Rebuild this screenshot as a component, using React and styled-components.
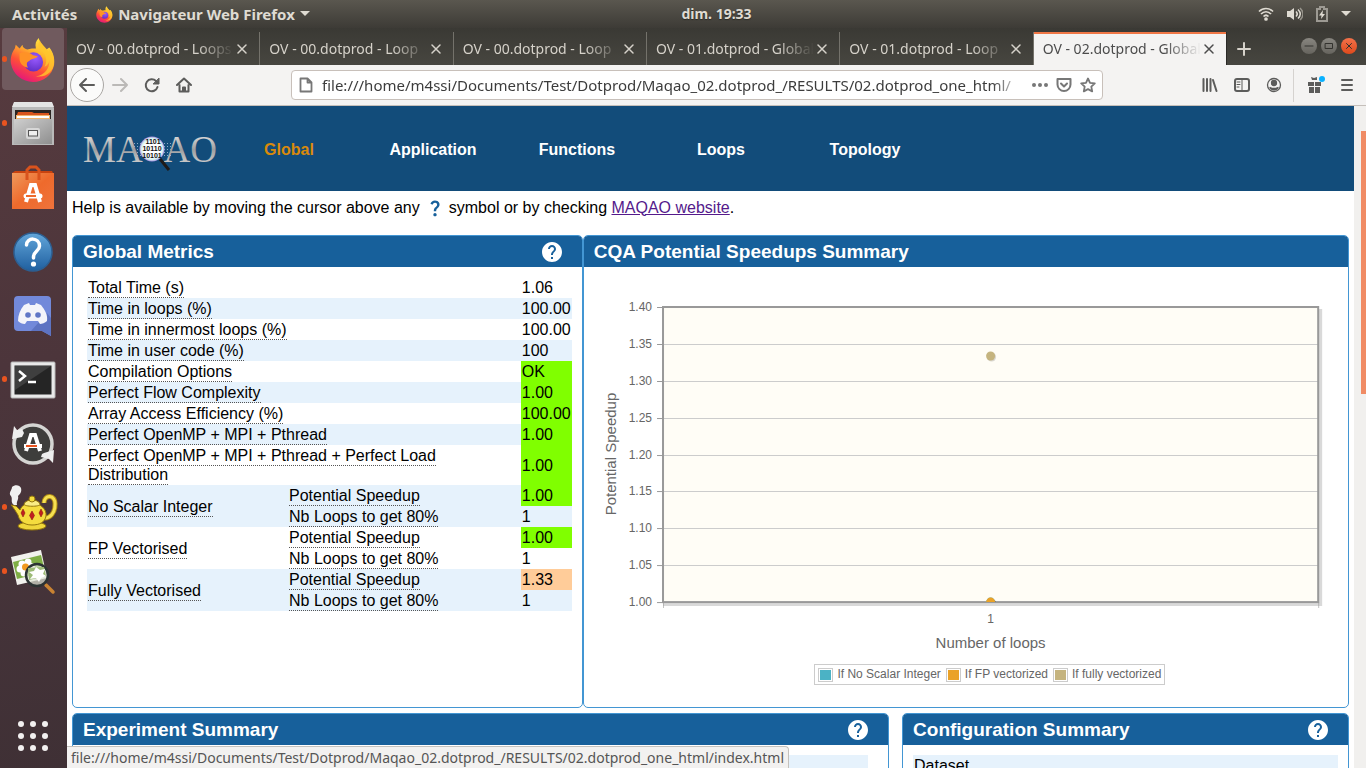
import React from "react";
import styled, { createGlobalStyle, css } from "styled-components";
import { MdHelp, MdQuestionMark } from "react-icons/md";

const shellFont = '"Noto Sans", "Open Sans", sans-serif';
const pageFont = '"Liberation Sans", Arial, sans-serif';

const GlobalStyle = createGlobalStyle`
  *, *::before, *::after { box-sizing: border-box; }
  body { margin: 0; background: #3a2b30; overflow: hidden; }
  button { font: inherit; color: inherit; background: none; border: 0; padding: 0; margin: 0; }
  svg { display: block; flex: none; }
`;

/* ---------- desktop shell ---------- */

const Desktop = styled.div`
  display: grid;
  grid-template-rows: 28px minmax(0, 1fr);
  height: 100vh;
  font-family: ${shellFont};
  font-size: 14px;
`;

const SystemBar = styled.header`
  display: grid;
  grid-template-columns: 1fr auto 1fr;
  align-items: center;
  padding: 0 15px 0 12px;
  background: linear-gradient(#5a574f, #3d3b36);
  color: #dfdbd2;
  font-weight: 700;
  text-shadow: 0 1px 1px #2b2a26;
  button, time { line-height: 20px; }
`;

const Clock = styled.time`
  padding-left: 70px;
  font-size: 14px;
`;

const BarGroup = styled.div`
  display: flex;
  align-items: center;
  font-size: 15px;
  gap: ${(p) => p.$gap}px;
  justify-content: ${(p) => (p.$end ? "flex-end" : "flex-start")};
`;

const AppMenu = styled.button`
  display: flex;
  align-items: center;
  gap: 5px;
`;

const Main = styled.div`
  display: grid;
  grid-template-columns: 67px minmax(0, 1fr);
  min-height: 0;
`;

const Dock = styled.nav`
  display: flex;
  flex-direction: column;
  min-height: 0;
  background: linear-gradient(170deg, #573b3f 0%, #4c353b 45%, #46343a 70%, #3f3035 100%);
`;

const DockItem = styled.button`
  position: relative;
  display: flex;
  align-items: center;
  justify-content: center;
  width: 62px;
  height: 62px;
  margin: 0 0 2px 2px;
  padding-top: 2px;
  border-radius: 4px;
  flex: none;
  ${(p) => p.$active && css`background: #705a5e;`}
  ${(p) => p.$running && css`
    &::before {
      content: "";
      position: absolute;
      left: 0;
      top: 28px;
      width: 5px;
      height: 6px;
      border-radius: 3px;
      background: #e95420;
    }
  `}
`;

const DockFooter = styled(DockItem)`
  margin-top: auto;
`;

/* ---------- browser window ---------- */

const Browser = styled.div`
  display: grid;
  grid-template-rows: 37px 41px minmax(0, 1fr);
  min-width: 0;
  min-height: 0;
`;

const TabStrip = styled.div`
  display: flex;
  align-items: flex-end;
  background: linear-gradient(#3a3934, #474640);
  color: #d6d2ca;
`;

const Tabs = styled.div`
  display: flex;
  flex: 0 1 1160px;
  min-width: 0;
`;

const Tab = styled.div`
  display: flex;
  align-items: center;
  flex: 1 1 0;
  min-width: 0;
  height: 33px;
  padding: 0 9px;
  border-right: 1px solid #74726b;
  ${(p) => p.$active && css`
    background: #f4f3f2;
    color: #4c4c4c;
    border-right-color: #2b2a27;
    box-shadow: inset 0 2px #f07746;
  `}
`;

const TabTitle = styled.button`
  flex: 1;
  min-width: 0;
  overflow: hidden;
  white-space: nowrap;
  text-align: left;
  line-height: 24px;
  mask-image: linear-gradient(to right, #000 calc(100% - 36px), transparent);
`;

const IconButton = styled.button`
  display: inline-flex;
  align-items: center;
  justify-content: center;
  width: ${(p) => p.$size || 16}px;
  height: ${(p) => p.$size || 16}px;
  flex: none;
`;

const NewTab = styled(IconButton)`
  height: 33px;
  width: 33px;
`;

const WindowButtons = styled.div`
  display: flex;
  gap: 4px;
  margin-left: auto;
  padding: 0 9px 11px 0;
`;

const WindowButton = styled(IconButton)`
  border-radius: 50%;
  color: #33322e;
  background: ${(p) => (p.$close ? "linear-gradient(#f4724a, #df4a1c)" : "linear-gradient(#888680, #66645e)")};
`;

const Toolbar = styled.div`
  display: flex;
  align-items: center;
  background: #f4f3f2;
  border-bottom: 1px solid #c5bfba;
  color: #5c5c5b;
  padding: 0 11px 0 3px;
`;

const BackButton = styled(IconButton)`
  border: 1px solid #a9a6a3;
  border-radius: 50%;
  background: #fbfbfa;
`;

const NavButtons = styled.div`
  display: flex;
  align-items: center;
  gap: 16px;
  padding-left: 8px;
`;

const AddressBar = styled.div`
  display: flex;
  align-items: center;
  flex: 0 1 812px;
  min-width: 0;
  height: 30px;
  margin: 0 auto 0 99px;
  padding: 0 6px;
  gap: 8px;
  background: #fff;
  border: 1px solid #c8c0ba;
  border-radius: 4px;
  color: #777;
`;

const AddressInput = styled.input`
  flex: 1;
  min-width: 0;
  padding: 0;
  border: 0;
  outline: 0;
  background: transparent;
  color: #3c3c3c;
  font-family: ${shellFont};
  font-size: 15px;
  line-height: 24px;
  mask-image: linear-gradient(to right, #000 calc(100% - 32px), transparent);
`;

const ToolGroup = styled.div`
  display: flex;
  align-items: center;
  gap: ${(p) => p.$gap || 16}px;
`;

const Divider = styled.span`
  width: 1px;
  height: 33px;
  margin: 0 13px 0 11px;
  background: #d5d2cf;
`;

const Viewport = styled.div`
  position: relative;
  display: grid;
  grid-template-columns: minmax(0, 1fr) 12px;
  min-height: 0;
  overflow: hidden;
`;

const ScrollTrack = styled.div`
  display: flex;
  justify-content: flex-end;
  padding-top: 25px;
  background: #f1f0ee;
`;

const ScrollThumb = styled.div`
  width: 5px;
  height: 263px;
  background: #f08b64;
`;

const StatusBar = styled.div`
  position: absolute;
  left: 0;
  bottom: 0;
  height: 22px;
  padding: 0 4px;
  line-height: 21px;
  color: #555;
  background: #f2f1f0;
  border: 1px solid #c4c1bd;
  border-width: 1px 1px 0 0;
  border-radius: 0 4px 0 0;
  white-space: nowrap;
`;

/* ---------- report page ---------- */

const Report = styled.main`
  min-width: 0;
  min-height: 0;
  overflow: hidden;
  background: #fff;
  color: #000;
  font-family: ${pageFont};
  font-size: 16px;
  line-height: 19px;
`;

const Masthead = styled.header`
  display: flex;
  align-items: center;
  height: 85px;
  padding: 2px 0 0 16px;
  background: #124c7a;
`;

const Menu = styled.nav`
  display: flex;
`;

const MenuLink = styled.a`
  width: 144px;
  text-align: center;
  font-weight: 700;
  text-decoration: none;
  color: ${(p) => (p.$active ? "#d98a0b" : "#fff")};
`;

const HelpLine = styled.p`
  display: flex;
  align-items: center;
  height: 32px;
  margin: 0;
  padding: 0 5px;
  white-space: pre;
  svg { margin: 2px 4px 0 5px; color: #17609b; }
  a { color: #551a8b; }
`;

const PanelRow = styled.div`
  display: grid;
  grid-template-columns: ${(p) => p.$columns};
  justify-content: space-between;
  margin: ${(p) => p.$top}px 5px 0;
`;

const PanelBox = styled.section`
  min-width: 0;
  min-height: ${(p) => p.$height}px;
  border: 1px solid #4396d3;
  border-radius: 5px;
  overflow: hidden;
`;

const PanelHeader = styled.header`
  display: flex;
  align-items: center;
  justify-content: space-between;
  height: 31px;
  padding: 0 18px 0 10px;
  background: #17609b;
  color: #fff;
`;

const PanelTitle = styled.h2`
  margin: 0;
  font-size: 19px;
  line-height: 24px;
`;

const PanelBody = styled.div`
  padding: 10px ${(p) => p.$right || 10}px 0 ${(p) => p.$left || 10}px;
`;

const Metrics = styled.table`
  width: 100%;
  table-layout: fixed;
  border-collapse: collapse;
  td, th {
    height: 21px;
    padding: 1px;
    font-weight: 400;
    text-align: left;
    vertical-align: middle;
  }
`;

const Row = styled.tr`
  background: ${(p) => (p.$shade ? "#e6f2fc" : "#fff")};
`;

const Value = styled.td`
  background: ${(p) => ({ good: "#80ff00", warn: "#ffcc99" }[p.$tone] || "transparent")};
`;

const Term = styled.span`
  padding-bottom: 1px;
  border-bottom: 1px dotted #555;
`;

const ChartSvg = styled.svg`
  width: 100%;
  height: auto;
  font-family: ${pageFont};
`;

const Legend = styled.ul`
  display: flex;
  width: max-content;
  margin: 7px auto 0;
  position: relative;
  left: 24px;
  padding: 1px 3px;
  gap: 5px;
  border: 1px solid #ccc;
  list-style: none;
  color: #666;
  font-size: 12px;
  line-height: 17px;
`;

const LegendItem = styled.li`
  display: flex;
  align-items: center;
  gap: 4px;
`;

const Swatch = styled.span`
  width: 15px;
  height: 14px;
  padding: 1px;
  border: 1px solid #ccc;
  background: ${(p) => p.$color} content-box;
`;

/* ---------- drawings ---------- */

function Firefox({ size }) {
  return (
    <svg width={size} height={size} viewBox="0 0 48 48" aria-hidden="true">
      <defs>
        <linearGradient id="ffx" x1="0.8" y1="0" x2="0.3" y2="1">
          <stop offset="0" stopColor="#fff04a" />
          <stop offset="0.35" stopColor="#ffb52b" />
          <stop offset="0.65" stopColor="#ff5136" />
          <stop offset="1" stopColor="#e3137e" />
        </linearGradient>
        <radialGradient id="ffb" cx="0.6" cy="0.3" r="0.8">
          <stop offset="0" stopColor="#9a5bff" />
          <stop offset="1" stopColor="#5a2ac0" />
        </radialGradient>
      </defs>
      <path fill="url(#ffx)" d="M30 1c1 5 5 8 8 12l3-2c4 5 6 11 5 18-2 11-11 18-22 18S3 39 1 28c-1-6 1-12 4-16l1-4 4 4 3-4c0 3 2 4 5 5 3-1 7-1 9-1-1-5 0-8 3-11z" />
      <circle cx="24.500" cy="26" r="10" fill="url(#ffb)" />
      <path fill="#ff9226" d="M10 17c5-2 11-1 14 2l5 1c-2 3-7 2-9 5-3 1-3 4-1 7-6-1-9-5-9-9z" />
      <path fill="#ffc52c" opacity="0.800" d="M31 13c6 4 9 11 5 18 3-1 5-4 5-7 1 8-5 16-14 17 11 2 19-6 19-15 0-6-2-11-6-14l1 4c-3-5-8-8-10-13-2 4-2 7 0 10z" />
    </svg>
  );
}

function Files() {
  return (
    <svg width="44" height="46" viewBox="0 0 44 46" aria-hidden="true">
      <defs>
        <linearGradient id="cab" x1="0" y1="0" x2="1" y2="1">
          <stop offset="0" stopColor="#cfcfcf" />
          <stop offset="1" stopColor="#8f8f8f" />
        </linearGradient>
      </defs>
      <path fill="#b9b9b9" d="M3 2h38l2 5v37H1V7z" />
      <path fill="#e4e4e4" d="M3 1h38l2 5H1z" />
      <path fill="#2b2522" d="M4 9h36v10H4z" />
      <path fill="#d9541c" d="M7 11h14l2 1h15v4H5z" />
      <path fill="#f2b36c" d="M5 14h34v5H5z" />
      <path fill="#fff" d="M6 15h32v2H6z" />
      <path fill="url(#cab)" d="M3 18h38v25H3z" />
      <rect x="15" y="27" width="14" height="11" rx="2" fill="#d7d7d7" />
      <rect x="17.500" y="29.500" width="9" height="5.500" fill="#eee" stroke="#555" />
    </svg>
  );
}

function Software() {
  return (
    <svg width="44" height="46" viewBox="0 0 44 46" aria-hidden="true">
      <defs>
        <linearGradient id="bag" x1="0" y1="0" x2="1" y2="1">
          <stop offset="0" stopColor="#ef9a5c" />
          <stop offset="0.5" stopColor="#ee6a2c" />
          <stop offset="1" stopColor="#f0733c" />
        </linearGradient>
      </defs>
      <path fill="#c9430f" d="M1 8l3-2h37l2 4H1z" />
      <path fill="url(#bag)" d="M1 8h42v36H1z" />
      <path fill="none" stroke="#d9531d" strokeWidth="3" d="M16 15V5l3-3h6l3 3v10" />
      <path fill="none" stroke="#fff" strokeWidth="4" d="M15 37l5-17h4l5 17" />
      <path stroke="#fff" strokeWidth="5" strokeLinecap="round" d="M15 31h14" />
      <path stroke="#ee6a2c" strokeWidth="2" d="M15 31h10" />
    </svg>
  );
}

function HelpBubble() {
  return (
    <svg width="42" height="42" viewBox="0 0 42 42" aria-hidden="true">
      <defs>
        <linearGradient id="hlp" x1="0" y1="0" x2="0" y2="1">
          <stop offset="0" stopColor="#62a6da" />
          <stop offset="1" stopColor="#1f5f9f" />
        </linearGradient>
      </defs>
      <circle cx="21" cy="21" r="19" fill="url(#hlp)" stroke="#2c5f92" strokeWidth="1.500" />
      <path fill="none" stroke="#fff" strokeWidth="3.500" strokeLinecap="round" d="M14.500 14c0-8 13-8 13 1 0 5-6 5-6 11v1" />
      <circle cx="21.500" cy="33" r="2.600" fill="#fff" />
    </svg>
  );
}

function Discord() {
  return (
    <svg width="40" height="42" viewBox="0 0 40 42" aria-hidden="true">
      <path fill="#7289da" d="M5 1h29a4 4 0 0 1 4 4v36l-9-5H5a4 4 0 0 1-4-4V5a4 4 0 0 1 4-4z" />
      <path fill="#5d73c2" d="M34 18l4 5v18l-9-5H18z" />
      <path fill="#f4f4fa" d="M11 10l5-2 1 2h5l1-2 5 2c4 5 7 10 6 16-2 2-5 3-7 3l-2-3H14l-2 3c-3 0-5-1-7-3 0-6 2-11 6-16z" />
      <circle cx="15" cy="20" r="2.800" fill="#6076c6" />
      <circle cx="25" cy="20" r="2.800" fill="#6076c6" />
    </svg>
  );
}

function Terminal() {
  return (
    <svg width="46" height="40" viewBox="0 0 46 40" aria-hidden="true">
      <rect x="1" y="2" width="44" height="36" rx="1" fill="#e9e9e9" stroke="#b6b6b6" />
      <rect x="4.500" y="5.500" width="37" height="29" fill="#252525" />
      <path fill="#3f3f3f" d="M5 6h36L5 30z" />
      <path fill="none" stroke="#fff" strokeWidth="2.500" d="M9 11l6 5-6 5M18 22h8" />
    </svg>
  );
}

function Updater() {
  return (
    <svg width="44" height="44" viewBox="0 0 44 44" aria-hidden="true">
      <circle cx="22" cy="22" r="19" fill="#3e3e3c" stroke="#d5d5d3" strokeWidth="3.500" />
      <path fill="#eee" d="M1 17L3 4l3 4 5-1 2 4-2 4zM43 28l-1 13-4-4-8-2 1-3 2-1z" />
      <path fill="none" stroke="#fff" strokeWidth="4" d="M15 29l5-16h4l5 16" />
      <path stroke="#fff" strokeWidth="4" d="M13 24h18" />
      <path stroke="#e95420" strokeWidth="2" d="M15 24h11" />
    </svg>
  );
}

function Teapot() {
  return (
    <svg width="50" height="48" viewBox="0 0 50 48" aria-hidden="true">
      <path fill="#f1f1f1" d="M6 21C2 18 5 15 3 12 0 9 4 6 4 3c3-3 8-2 9 1 1 4-1 6-3 8 1 4-2 5-1 9z" />
      <path fill="none" stroke="#b08c14" strokeWidth="5" d="M36 19c0-9 12-9 11 2 0 8-5 13-10 13" />
      <path fill="none" stroke="#f6e052" strokeWidth="3" d="M36 19c0-9 12-9 11 2 0 8-5 13-10 13" />
      <ellipse cx="24" cy="42" rx="14" ry="4" fill="#f0d63a" stroke="#94760c" />
      <path fill="#f5dc3e" stroke="#94760c" d="M3 21l5 1 4 4c2-5 6-7 12-7 8 0 15 6 14 13-1 6-6 9-14 9-9 0-13-5-14-10C8 28 6 24 3 21z" />
      <path fill="#f9ec85" stroke="#94760c" d="M16 20c1-3 5-4 8-4s7 1 8 4-16 3-16 0z" />
      <circle cx="24" cy="15" r="3" fill="#f5dc3e" stroke="#94760c" />
      <path fill="#c21f1f" stroke="#7d1010" strokeWidth="0.500" d="M15 25l2 4-2 4-2-4zM24 27l2.500 4.500L24 36l-2.500-4.500zM33 25l2 4-2 4-2-4z" />
    </svg>
  );
}

function ImageViewer() {
  return (
    <svg width="46" height="46" viewBox="0 0 46 46" aria-hidden="true">
      <path fill="#f2f2ee" d="M1 8l30-7 6 28-30 7z" />
      <path fill="#7fae45" d="M3 13l28-7 4 17-28 7z" />
      <g fill="#fff">
        <circle cx="12" cy="15" r="3.500" /><circle cx="18" cy="13" r="3.500" /><circle cx="10" cy="20" r="3.500" /><circle cx="14" cy="24" r="3.500" /><circle cx="21" cy="18" r="4" />
      </g>
      <circle cx="15.500" cy="18" r="3.500" fill="#f29a1f" />
      <path stroke="#c98332" strokeWidth="3.500" strokeLinecap="round" d="M36 36l7 7" />
      <circle cx="27" cy="26" r="11" fill="#dfe4d4" fillOpacity="0.700" stroke="#2c3333" strokeWidth="2.500" />
      <path fill="#9dbb77" d="M18 19l16-1 2 9-17 4z" />
      <path fill="#fff" d="M19 23l5-1 2-4 4 3 5-1-2 5 3 2-5 2-2 4-3-4-6 1 3-4z" />
    </svg>
  );
}

function AppGrid() {
  return (
    <svg width="34" height="34" viewBox="0 0 34 34" aria-hidden="true" fill="#f2f0f0">
      {[5, 17, 29].map((y) => [5, 17, 29].map((x) => <circle key={`${x}-${y}`} cx={x} cy={y} r="3" />))}
    </svg>
  );
}

function Line({ d, size = 16, width = 2, children }) {
  return (
    <svg width={size} height={size} viewBox={`0 0 ${size} ${size}`} fill="none" stroke="currentColor" strokeWidth={width} strokeLinecap="round" strokeLinejoin="round" aria-hidden="true">
      {d && <path d={d} />}
      {children}
    </svg>
  );
}

const Caret = () => (
  <svg width="10" height="6" viewBox="0 0 10 6" aria-hidden="true"><path fill="currentColor" d="M0 0h10L5 5z" /></svg>
);

function MaqaoLogo() {
  return (
    <svg width="134" height="44" viewBox="0 0 134 44" role="img" aria-label="MAQAO">
      <defs>
        <linearGradient id="steel" x1="0" y1="0" x2="0" y2="1">
          <stop offset="0.200" stopColor="#d3d3d3" />
          <stop offset="0.500" stopColor="#9d9fa1" />
          <stop offset="0.800" stopColor="#c6c6c6" />
        </linearGradient>
        <radialGradient id="lens">
          <stop offset="0.650" stopColor="#fff" />
          <stop offset="0.850" stopColor="#d3f2f0" />
          <stop offset="1" stopColor="#a58be0" />
        </radialGradient>
        <pattern id="bits" width="3" height="3" patternUnits="userSpaceOnUse">
          <rect width="1" height="1" fill="#8aa9c6" />
        </pattern>
      </defs>
      <rect x="51" y="14" width="38" height="14" fill="url(#bits)" />
      <g fill="url(#steel)" fontFamily="Liberation Serif, Times New Roman, serif" fontSize="37">
        <text x="0" y="34">MA</text>
        <text x="134" y="34" textAnchor="end">AO</text>
      </g>
      <path stroke="#1e1a18" strokeWidth="3" d="M77 31l9 11" />
      <circle cx="69" cy="21" r="12.500" fill="url(#lens)" />
      <g fill="#111" fontFamily="Liberation Sans, sans-serif" fontSize="7" fontWeight="700" textAnchor="middle">
        <text x="70" y="16">1101</text>
        <text x="69" y="23">10110</text>
        <text x="69" y="30">10101</text>
      </g>
    </svg>
  );
}

/* ---------- data ---------- */

const dockItems = [
  { label: "Firefox", icon: <Firefox size={46} />, active: true, running: true },
  { label: "Fichiers", icon: <Files />, running: true },
  { label: "Logiciels", icon: <Software /> },
  { label: "Aide", icon: <HelpBubble /> },
  { label: "Discord", icon: <Discord /> },
  { label: "Terminal", icon: <Terminal />, running: true },
  { label: "Mises à jour", icon: <Updater /> },
  { label: "Kettle", icon: <Teapot />, running: true },
  { label: "Images", icon: <ImageViewer />, running: true },
];

const tabs = [
  { id: 1, title: "OV - 00.dotprod - Loops" },
  { id: 2, title: "OV - 00.dotprod - Loop" },
  { id: 3, title: "OV - 00.dotprod - Loop" },
  { id: 4, title: "OV - 01.dotprod - Global" },
  { id: 5, title: "OV - 01.dotprod - Loop" },
  { id: 6, title: "OV - 02.dotprod - Global", active: true },
];

const metrics = [
  { name: "Total Time (s)", value: "1.06" },
  { name: "Time in loops (%)", value: "100.00" },
  { name: "Time in innermost loops (%)", value: "100.00" },
  { name: "Time in user code (%)", value: "100" },
  { name: "Compilation Options", value: "OK", tone: "good" },
  { name: "Perfect Flow Complexity", value: "1.00", tone: "good" },
  { name: "Array Access Efficiency (%)", value: "100.00", tone: "good" },
  { name: "Perfect OpenMP + MPI + Pthread", value: "1.00", tone: "good" },
  { name: "Perfect OpenMP + MPI + Pthread + Perfect Load Distribution", value: "1.00", tone: "good" },
  { name: "No Scalar Integer", speedup: "1.00", tone: "good", loops: "1" },
  { name: "FP Vectorised", speedup: "1.00", tone: "good", loops: "1" },
  { name: "Fully Vectorised", speedup: "1.33", tone: "warn", loops: "1" },
];

const series = [
  { name: "If No Scalar Integer", color: "#4bb2c5", value: 1.0 },
  { name: "If FP vectorized", color: "#eaa228", value: 1.0 },
  { name: "If fully vectorized", color: "#c5b47f", value: 1.333 },
];

const ticks = [1.4, 1.35, 1.3, 1.25, 1.2, 1.15, 1.1, 1.05, 1.0];
const reportFolder = "file:///home/m4ssi/Documents/Test/Dotprod/Maqao_02.dotprod_/RESULTS/02.dotprod_one_html/";
const statusUrl = `${reportFolder}index.html`;

/* ---------- parts ---------- */

function Panel({ title, help, height, left, right, children }) {
  return (
    <PanelBox $height={height}>
      <PanelHeader>
        <PanelTitle>{title}</PanelTitle>
        {help && <IconButton $size={24} aria-label={`Help: ${title}`}><MdHelp size={24} /></IconButton>}
      </PanelHeader>
      <PanelBody $left={left} $right={right}>{children}</PanelBody>
    </PanelBox>
  );
}

const GroupColumn = styled.col`
  width: 201px;
`;

const ValueColumn = styled.col`
  width: 51px;
`;

function MetricsTable() {
  return (
    <Metrics>
      <colgroup>
        <GroupColumn />
        <col />
        <ValueColumn />
      </colgroup>
      <tbody>
        {metrics.map((m, i) =>
          m.speedup ? (
            <React.Fragment key={m.name}>
              <Row $shade={i % 2 === 1}>
                <th scope="row" rowSpan={2}><Term>{m.name}</Term></th>
                <td><Term>Potential Speedup</Term></td>
                <Value $tone={m.tone}>{m.speedup}</Value>
              </Row>
              <Row $shade={i % 2 === 1}>
                <td><Term>Nb Loops to get 80%</Term></td>
                <Value>{m.loops}</Value>
              </Row>
            </React.Fragment>
          ) : (
            <Row key={m.name} $shade={i % 2 === 1}>
              <th scope="row" colSpan={2}><Term>{m.name}</Term></th>
              <Value $tone={m.tone}>{m.value}</Value>
            </Row>
          )
        )}
      </tbody>
    </Metrics>
  );
}

const plot = { left: 79, right: 734, top: 40, bottom: 335 };
const yOf = (v) => Math.round(plot.bottom - ((v - 1) / 0.4) * (plot.bottom - plot.top));

function SpeedupChart() {
  const middle = (plot.left + plot.right) / 2;
  return (
    <>
      <ChartSvg viewBox="0 0 764 390" role="img" aria-label="Potential speedup by number of loops">
        <defs>
          <clipPath id="area"><rect x={plot.left} y={plot.top} width={plot.right - plot.left} height={plot.bottom - plot.top} /></clipPath>
        </defs>
        <path fill="none" stroke="#000" strokeOpacity="0.150" strokeWidth="4" d={`M${plot.left} ${plot.bottom + 2}H${plot.right + 2}V${plot.top + 2}`} />
        <rect x={plot.left} y={plot.top} width={plot.right - plot.left} height={plot.bottom - plot.top} fill="#fffdf6" />
        {ticks.map((t) => (
          <g key={t}>
            <line x1={plot.left} x2={plot.right} y1={yOf(t) + 0.5} y2={yOf(t) + 0.5} stroke="#ccc" />
            <line x1={plot.left - 6} x2={plot.left} y1={yOf(t) + 0.5} y2={yOf(t) + 0.5} stroke="#999" />
            <text x="68" y={yOf(t) + 4} textAnchor="end" fontSize="12" fill="#666">{t.toFixed(2)}</text>
          </g>
        ))}
        <path stroke="#999" strokeOpacity="0.600" d={`M${plot.left + 0.5} ${plot.bottom}v6M${plot.right + 0.5} ${plot.bottom}v6`} />
        <rect x={plot.left} y={plot.top} width={plot.right - plot.left} height={plot.bottom - plot.top} fill="none" stroke="#999" strokeWidth="2" />
        <g clipPath="url(#area)">
          {series.map((s) => (
            <g key={s.name}>
              <circle cx={middle + 1} cy={yOf(s.value) + 1} r="4.500" fill="#000" opacity="0.150" />
              <circle cx={middle} cy={yOf(s.value)} r="4.500" fill={s.color} />
            </g>
          ))}
        </g>
        <g fill="#666" textAnchor="middle">
          <text x={middle} y="356" fontSize="12">1</text>
          <text x={middle} y="381" fontSize="15">Number of loops</text>
          <text transform="translate(32 187) rotate(-90)" fontSize="15">Potential Speedup</text>
        </g>
      </ChartSvg>
      <Legend>
        {series.map((s) => (
          <LegendItem key={s.name}><Swatch $color={s.color} />{s.name}</LegendItem>
        ))}
      </Legend>
    </>
  );
}

function ReportPage() {
  return (
    <Report>
      <Masthead>
        <MaqaoLogo />
        <Menu>
          {["Global", "Application", "Functions", "Loops", "Topology"].map((m, i) => (
            <MenuLink key={m} href="#" $active={i === 0}>{m}</MenuLink>
          ))}
        </Menu>
      </Masthead>
      <HelpLine>
        <span>Help is available by moving the cursor above any</span>
        <MdQuestionMark size={20} />
        <span>symbol or by checking <a href="#">MAQAO website</a>.</span>
      </HelpLine>
      <PanelRow $columns="2fr 3fr" $top={12}>
        <Panel title="Global Metrics" help height={473} left={14}><MetricsTable /></Panel>
        <PanelBox $height={473}>
          <PanelHeader><PanelTitle>CQA Potential Speedups Summary</PanelTitle></PanelHeader>
          <SpeedupChart />
        </PanelBox>
      </PanelRow>
      <PanelRow $columns="64% 35%" $top={5}>
        <Panel title="Experiment Summary" help height={120} left={14} right={20}>
          <Metrics><tbody><Row $shade><td /></Row></tbody></Metrics>
        </Panel>
        <Panel title="Configuration Summary" help height={120}>
          <Metrics><tbody><Row $shade><td>Dataset</td></Row></tbody></Metrics>
        </Panel>
      </PanelRow>
    </Report>
  );
}

export default function App() {
  return (
    <Desktop>
      <GlobalStyle />
      <SystemBar>
        <BarGroup $gap={19}>
          <button>Activités</button>
          <AppMenu><Firefox size={17} /><span>Navigateur Web Firefox</span><Caret /></AppMenu>
        </BarGroup>
        <Clock>dim. 19:33</Clock>
        <BarGroup $end $gap={13}>
          <svg width="16" height="14" viewBox="0 0 16 14" fill="none" stroke="currentColor" strokeWidth="1.700" aria-hidden="true">
            <path d="M1 4.500c4-4 10-4 14 0M3 7c3-3 7-3 10 0M5.500 9.500c1.500-1.500 3.500-1.500 5 0" /><circle cx="8" cy="12" r="1" fill="currentColor" />
          </svg>
          <svg width="16" height="14" viewBox="0 0 16 14" fill="none" stroke="currentColor" strokeWidth="1.500" aria-hidden="true">
            <path fill="currentColor" stroke="none" d="M0 4h3l4-3v12l-4-3H0z" /><path d="M9 4.500c1.500 1.500 1.500 3.500 0 5M11 2.500c3 3 3 6 0 9" /><path opacity="0.500" d="M13 1c4 4 4 8 0 12" />
          </svg>
          <svg width="12" height="16" viewBox="0 0 12 16" aria-hidden="true">
            <path fill="none" stroke="#9d9a93" strokeWidth="2" d="M1 3h3V1h4v2h3v12H1z" /><path fill="currentColor" d="M7 4L3 9.500h2.500L5 13l4-5H6.500z" />
          </svg>
          <Caret />
        </BarGroup>
      </SystemBar>
      <Main>
        <Dock>
          {dockItems.map((d) => (
            <DockItem key={d.label} aria-label={d.label} $active={d.active} $running={d.running}>{d.icon}</DockItem>
          ))}
          <DockFooter aria-label="Applications"><AppGrid /></DockFooter>
        </Dock>
        <Browser>
          <TabStrip>
            <Tabs>
              {tabs.map((t) => (
                <Tab key={t.id} $active={t.active}>
                  <TabTitle>{t.title}</TabTitle>
                  <IconButton aria-label="Fermer l’onglet"><Line d="M4 4l8 8M12 4l-8 8" width={1.5} /></IconButton>
                </Tab>
              ))}
            </Tabs>
            <NewTab aria-label="Nouvel onglet"><Line d="M8 2v12M2 8h12" /></NewTab>
            <WindowButtons>
              <WindowButton aria-label="Réduire"><Line d="M4 8h8" width={1} /></WindowButton>
              <WindowButton aria-label="Agrandir"><Line d="M4.500 5.500h7v5h-7z" width={1} /></WindowButton>
              <WindowButton $close aria-label="Fermer"><Line d="M5.500 5.500l5 5M10.500 5.500l-5 5" width={1} /></WindowButton>
            </WindowButtons>
          </TabStrip>
          <Toolbar>
            <BackButton $size={34} aria-label="Précédent"><Line d="M15 8H1M7 2L1 8l6 6" /></BackButton>
            <NavButtons>
              <IconButton aria-label="Suivant" disabled><svg width="16" height="16" viewBox="0 0 16 16" fill="none" stroke="#bbb9b7" strokeWidth="2" strokeLinecap="round" strokeLinejoin="round"><path d="M1 8h14M9 2l6 6-6 6" /></svg></IconButton>
              <IconButton aria-label="Actualiser"><Line><path d="M13.500 10A6 6 0 1 1 12 4l1.500 1.500" /><path fill="currentColor" strokeWidth="1" d="M15 1.500V7H9.500z" /></Line></IconButton>
              <IconButton aria-label="Accueil"><Line d="M1 8l7-6.500L15 8M3.500 8v6.500h9V8M7 14V10.500h2V14" /></IconButton>
            </NavButtons>
            <AddressBar>
              <Line d="M2.500 1.500h7l4 4v9h-11zM9.500 1.500v4h4" width={1.8} />
              <AddressInput aria-label="Adresse" readOnly value={reportFolder} />
              <svg width="16" height="16" viewBox="0 0 16 16" fill="currentColor" aria-hidden="true"><circle cx="2" cy="8" r="2" /><circle cx="8" cy="8" r="2" /><circle cx="14" cy="8" r="2" /></svg>
              <IconButton aria-label="Pocket"><Line d="M1.500 2h13v5.500a6.500 6.500 0 0 1-13 0zM5 6.500l3 3 3-3" /></IconButton>
              <IconButton aria-label="Marque-page"><Line width={1.8} d="M8 1.500l2 4.300 4.800.6-3.500 3.200.9 4.800L8 12.100l-4.200 2.300.9-4.800L1.200 6.400 6 5.800z" /></IconButton>
            </AddressBar>
            <ToolGroup>
              <IconButton aria-label="Bibliothèque"><Line d="M1.500 2v12M5 2v12M8.500 2v12M11 3l3.500 11" /></IconButton>
              <IconButton aria-label="Panneaux"><Line><rect x="1" y="2" width="14" height="12" rx="2" /><path strokeWidth="1" d="M8 2v12M3 5h3M3 7.500h3M3 10h2" /></Line></IconButton>
              <IconButton aria-label="Compte"><Line width={1.3}><circle cx="8" cy="8" r="6.500" /><circle cx="8" cy="6" r="2.500" fill="currentColor" /><path fill="currentColor" d="M4 10.500c2 1 6 1 8 0-1 3-7 3-8 0z" /></Line></IconButton>
            </ToolGroup>
            <Divider />
            <ToolGroup $gap={14}>
              <IconButton $size={18} aria-label="Nouveautés">
                <svg width="18" height="18" viewBox="0 0 18 18" aria-hidden="true"><path fill="currentColor" d="M1 6h6v4H1zM8 6h6v4H8zM2 11h5v6H2zM8 11h5v6H8zM4 1l3 1 3-1v3H5z" /><circle cx="15" cy="3" r="3" fill="#0ab1ff" /></svg>
              </IconButton>
              <IconButton aria-label="Menu"><Line d="M3 3h10M3 8h10M3 13h10" /></IconButton>
            </ToolGroup>
          </Toolbar>
          <Viewport>
            <ReportPage />
            <ScrollTrack><ScrollThumb /></ScrollTrack>
            <StatusBar>{statusUrl}</StatusBar>
          </Viewport>
        </Browser>
      </Main>
    </Desktop>
  );
}
